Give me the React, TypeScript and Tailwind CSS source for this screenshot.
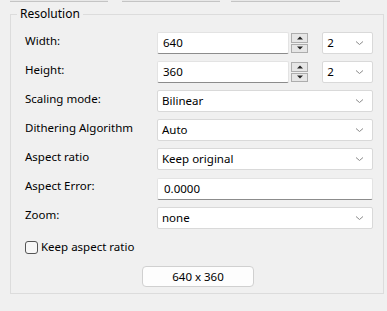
import { ReactNode } from 'react';

function Chevron() {
  return (
    <svg width="9" height="6" viewBox="0 0 9 6" className="shrink-0">
      <path d="M1 1.5 L4.5 4.5 L8 1.5" fill="none" stroke="#8a8a8a" strokeWidth="1" />
    </svg>
  );
}

function Combo({ value, className = '' }: { value: string; className?: string }) {
  return (
    <div
      className={`h-[22px] bg-white border border-[#d9d9d9] rounded-[2px] flex items-center justify-between pl-[4px] pr-[8px] ${className}`}
    >
      <span>{value}</span>
      <Chevron />
    </div>
  );
}

function TextBox({ value, className = '' }: { value: string; className?: string }) {
  return (
    <div
      className={`h-[22px] bg-white border border-[#e3e3e3] border-b-[#8c8c8c] rounded-[2px] flex items-center pl-[5px] ${className}`}
    >
      {value}
    </div>
  );
}

function Spinner() {
  return (
    <div className="flex flex-col gap-[1px] w-[17px] h-[20px] mt-[1px]">
      <div className="flex-1 bg-[#e6e6e6] border border-[#adadad] flex items-center justify-center">
        <svg width="6" height="4" viewBox="0 0 6 4">
          <path d="M0 3.5 L3 0.5 L6 3.5 Z" fill="#222" />
        </svg>
      </div>
      <div className="flex-1 bg-[#e6e6e6] border border-[#adadad] flex items-center justify-center">
        <svg width="6" height="4" viewBox="0 0 6 4">
          <path d="M0 0.5 L3 3.5 L6 0.5 Z" fill="#222" />
        </svg>
      </div>
    </div>
  );
}

function Row({ label, children }: { label: string; children: ReactNode }) {
  return (
    <>
      <div className="h-[22px] leading-[17px]">{label}</div>
      <div className="h-[22px]">{children}</div>
    </>
  );
}

function SizeRow({ label, value }: { label: string; value: string }) {
  return (
    <Row label={label}>
      <div className="flex items-start">
        <TextBox value={value} className="w-[133px]" />
        <div className="ml-[2px]">
          <Spinner />
        </div>
        <Combo value="2" className="w-[51px] ml-[14px]" />
      </div>
    </Row>
  );
}

export default function App() {
  return (
    <div
      className="w-[387px] h-[311px] bg-[#f0f0f0] text-[11.5px] text-black overflow-hidden"
      style={{ fontFamily: '"Noto Sans", "Liberation Sans", sans-serif' }}
    >
      {/* bottoms of the tab-like buttons above */}
      <div className="flex h-[2px]">
        <div className="ml-[10px] w-[98px] border-b border-[#c4c4c4] bg-[#e8e8e8]" />
        <div className="ml-[14px] w-[98px] border-b border-[#c4c4c4] bg-[#e8e8e8]" />
        <div className="ml-[11px] w-[109px] border-b border-[#c4c4c4] bg-[#e8e8e8]" />
      </div>

      <fieldset className="ml-[10px] mt-[4px] w-[374px] border border-[#dcdcdc] pl-[14px] pr-[10px] pt-[10px] pb-[6px]">
        <legend className="-ml-[8px] px-[3px] leading-[16px] text-[12px]">Resolution</legend>

        <div className="grid grid-cols-[132px_216px] gap-y-[7px]">
          <SizeRow label="Width:" value="640" />
          <SizeRow label="Height:" value="360" />
          <Row label="Scaling mode:">
            <Combo value="Bilinear" />
          </Row>
          <Row label="Dithering Algorithm">
            <Combo value="Auto" />
          </Row>
          <Row label="Aspect ratio">
            <Combo value="Keep original" />
          </Row>
          <Row label="Aspect Error:">
            <TextBox value="0.0000" className="pl-[6px] mt-[1px]" />
          </Row>
          <Row label="Zoom:">
            <Combo value="none" className="mt-[1px]" />
          </Row>
        </div>

        <label className="flex items-center mt-[11px] h-[16px]">
          <span className="w-[13px] h-[13px] border border-[#555] rounded-[3px] bg-[#f7f7f7] mr-[3px]" />
          <span>Keep aspect ratio</span>
        </label>

        <div className="flex mt-[11px] pl-[117px]">
          <button className="w-[112px] h-[21px] bg-[#fdfdfd] border border-[#d0d0d0] rounded-[4px] leading-none">
            640 x 360
          </button>
        </div>
      </fieldset>
    </div>
  );
}
